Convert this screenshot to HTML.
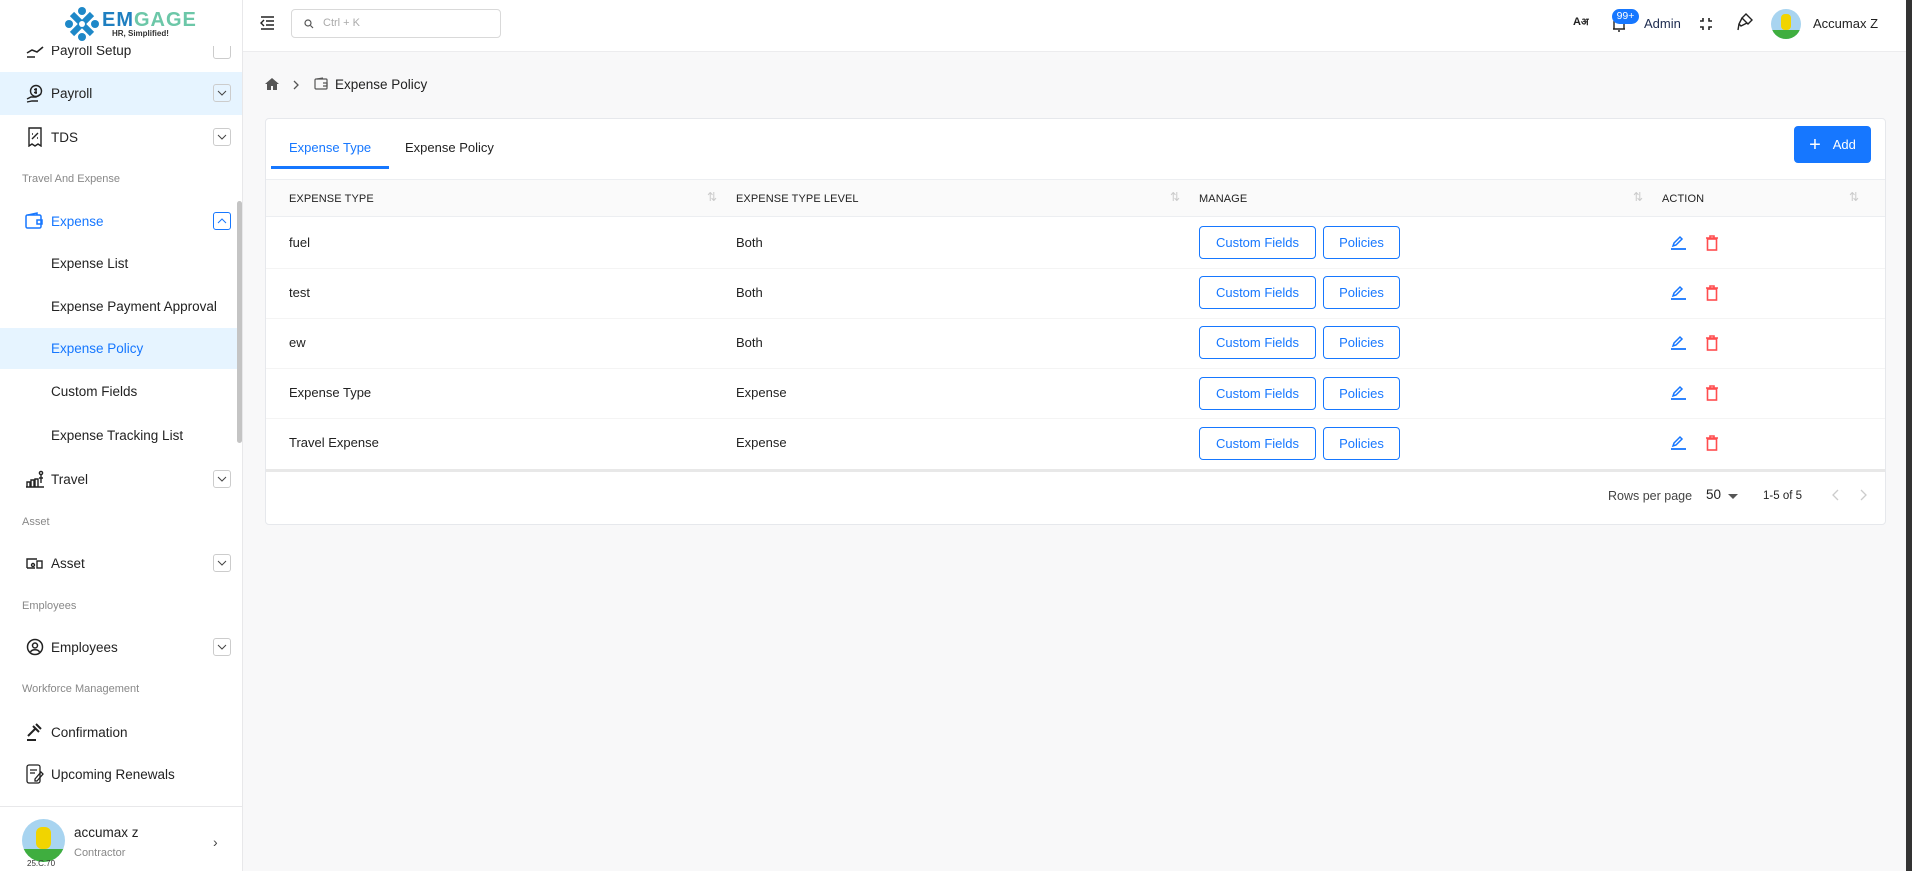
<!DOCTYPE html>
<html><head><meta charset="utf-8"><style>
*{box-sizing:border-box;margin:0;padding:0}
body{width:1912px;height:871px;overflow:hidden;background:#f8f8f9;font-family:"Liberation Sans",sans-serif;color:#222;position:relative}
.abs{position:absolute}
#side{left:0;top:0;width:243px;height:871px;background:#fff;border-right:1px solid #e8e8ea;overflow:hidden}
.item{position:absolute;left:0;width:242px;height:42px;display:flex;align-items:center;font-size:13.5px;color:#222}
.item .ic{position:absolute;left:25px;width:20px;height:20px;display:flex;align-items:center;justify-content:center}
.item .tx{position:absolute;left:51px}
.chev{position:absolute;left:213px;width:18px;height:18px;border:1px solid #ccc;border-radius:3px;display:flex;align-items:center;justify-content:center}
.sec{position:absolute;left:22px;font-size:11px;color:#888}
#hdr{left:243px;top:0;width:1669px;height:52px;background:#fff;border-bottom:1px solid #ececee}
.card{left:265px;top:118px;width:1621px;height:407px;background:#fff;border:1px solid #e6e8ec;border-radius:4px}
.th{position:absolute;top:193px;font-size:11px;color:#222;letter-spacing:.1px}
.cell{position:absolute;font-size:13px;color:#222}
.btn{position:absolute;height:33px;border:1px solid #1677ff;border-radius:4px;color:#1677ff;font-size:13px;display:flex;align-items:center;justify-content:center;background:#fff}
.sort{position:absolute;top:190px;color:#ccc;font-size:12px}
</style></head><body>
<div id="side" class="abs">
  <div class="item" style="top:29px;height:42px"><span class="ic"><svg width="20" height="18" viewBox="0 0 20 18"><path d="M2 12l5-3 5 2 6-5M2 16h8" stroke="#222" stroke-width="1.6" fill="none"/></svg></span><span class="tx">Payroll Setup</span><span class="chev" style="top:12px"></span></div>
  <div class="abs" style="left:0;top:0;width:242px;height:46px;background:#fff"></div>
  <div class="abs" style="left:64px;top:6px;width:36px;height:36px">
    <svg width="36" height="36" viewBox="0 0 36 36"><g fill="#1e88c8"><circle cx="18" cy="5" r="4"/><circle cx="18" cy="31" r="4"/><circle cx="5" cy="18" r="4"/><circle cx="31" cy="18" r="4"/><path d="M8 8l20 20M28 8L8 28" stroke="#1e88c8" stroke-width="6"/><circle cx="18" cy="18" r="3" fill="#fff"/></g></svg>
  </div>
  <div class="abs" style="left:102px;top:9px;font-size:20px;font-weight:bold;letter-spacing:1px"><span style="color:#1f7fc0">EM</span><span style="color:#6cc7a8">GAGE</span></div>
  <div class="abs" style="left:112px;top:29px;font-size:8px;font-weight:bold;color:#333">HR, Simplified!</div>

  <div class="item" style="top:72px;height:43px;background:#e6f4ff"><span class="ic"><svg width="20" height="20" viewBox="0 0 20 20" fill="none" stroke="#222" stroke-width="1.4"><circle cx="11" cy="7" r="5.5"/><path d="M11 4v6M9 5.5h3M9 8.5h3M2 15l4-2h5l5-3M2 18l5-1h6"/></svg></span><span class="tx">Payroll</span><span class="chev" style="top:12px"><svg width="10" height="6"><path d="M1 1l4 4 4-4" stroke="#444" fill="none"/></svg></span></div>
  <div class="item" style="top:116px"><span class="ic"><svg width="16" height="20" viewBox="0 0 16 20" fill="none" stroke="#222" stroke-width="1.4"><path d="M2 1h12v18l-3-2-3 2-3-2-3 2z"/><path d="M5 12l6-6M5 7h1M10 11h1"/></svg></span><span class="tx">TDS</span><span class="chev" style="top:12px"><svg width="10" height="6"><path d="M1 1l4 4 4-4" stroke="#444" fill="none"/></svg></span></div>
  <div class="sec" style="top:173px">Travel And Expense</div>
  <div class="item" style="top:200px;color:#1677ff"><span class="ic"><svg width="20" height="18" viewBox="0 0 20 18" fill="none" stroke="#1677ff" stroke-width="1.5"><rect x="1" y="3" width="15" height="13" rx="1.5"/><path d="M3 3l9-2v2M12 8h5v4h-5z"/></svg></span><span class="tx">Expense</span><span class="chev" style="top:12px;border-color:#1677ff"><svg width="10" height="6"><path d="M1 5l4-4 4 4" stroke="#1677ff" fill="none"/></svg></span></div>
  <div class="item" style="top:242px"><span class="tx">Expense List</span></div>
  <div class="item" style="top:285px"><span class="tx">Expense Payment Approval</span></div>
  <div class="item" style="top:328px;height:41px;background:#e6f4ff;color:#1677ff"><span class="tx">Expense Policy</span></div>
  <div class="abs" style="left:240px;top:328px;width:2px;height:41px;background:#1677ff"></div>
  <div class="item" style="top:370px"><span class="tx">Custom Fields</span></div>
  <div class="item" style="top:414px"><span class="tx">Expense Tracking List</span></div>
  <div class="item" style="top:458px"><span class="ic"><svg width="20" height="18" viewBox="0 0 20 18" fill="none" stroke="#222" stroke-width="1.4"><path d="M1 17h18M2 17v-5h3v5M6 17v-7h3v7M10 17V9h3v8"/><circle cx="16" cy="3" r="1.6"/><path d="M16 5v8M14 8h4"/></svg></span><span class="tx">Travel</span><span class="chev" style="top:12px"><svg width="10" height="6"><path d="M1 1l4 4 4-4" stroke="#444" fill="none"/></svg></span></div>
  <div class="sec" style="top:516px">Asset</div>
  <div class="item" style="top:542px"><span class="ic"><svg width="18" height="14" viewBox="0 0 18 14" fill="none" stroke="#222" stroke-width="1.4"><path d="M1 12V3h10M1 12h8"/><rect x="11" y="5" width="5" height="7"/><circle cx="7" cy="9" r="1.5"/></svg></span><span class="tx">Asset</span><span class="chev" style="top:12px"><svg width="10" height="6"><path d="M1 1l4 4 4-4" stroke="#444" fill="none"/></svg></span></div>
  <div class="sec" style="top:600px">Employees</div>
  <div class="item" style="top:626px"><span class="ic"><svg width="18" height="18" viewBox="0 0 18 18" fill="none" stroke="#222" stroke-width="1.5"><circle cx="9" cy="9" r="7.5"/><circle cx="9" cy="7.5" r="2.5"/><path d="M4.5 14c1.5-3 7.5-3 9 0"/></svg></span><span class="tx">Employees</span><span class="chev" style="top:12px"><svg width="10" height="6"><path d="M1 1l4 4 4-4" stroke="#444" fill="none"/></svg></span></div>
  <div class="sec" style="top:683px">Workforce Management</div>
  <div class="item" style="top:711px"><span class="ic"><svg width="20" height="18" viewBox="0 0 20 18" fill="none" stroke="#222" stroke-width="2"><path d="M8 3l6 6M11 1l5 5M10 6l-7 7M2 17h9"/></svg></span><span class="tx">Confirmation</span></div>
  <div class="item" style="top:753px"><span class="ic"><svg width="18" height="20" viewBox="0 0 18 20" fill="none" stroke="#222" stroke-width="1.3"><rect x="1" y="1" width="13" height="18" rx="2"/><path d="M4 6h7M4 9h5M9 15l6-7 2 2-6 7h-2z"/></svg></span><span class="tx">Upcoming Renewals</span></div>
  <div class="abs" style="left:237px;top:201px;width:5px;height:242px;background:#c4c4c4;border-radius:3px"></div>
  <div class="abs" style="left:0;top:806px;width:242px;height:65px;background:#fff;border-top:1px solid #e8e8ea"></div>
  <div class="abs" style="left:22px;top:819px;width:43px;height:43px;border-radius:50%;background:#a8d4f0;overflow:hidden"><div style="position:absolute;left:0;top:30px;width:43px;height:20px;background:#3fae3f"></div><div style="position:absolute;left:14px;top:8px;width:15px;height:22px;background:#f1d400;border-radius:6px"></div></div>
  <div class="abs" style="left:27px;top:859px;font-size:8px;color:#333">25.C.70</div>
  <div class="abs" style="left:74px;top:825px;font-size:13.5px;color:#222">accumax z</div>
  <div class="abs" style="left:74px;top:847px;font-size:11px;color:#888">Contractor</div>
  <div class="abs" style="left:213px;top:834px;font-size:14px;color:#444">›</div>
</div>

<div id="hdr" class="abs">
  <svg class="abs" style="left:17px;top:16px" width="15" height="14" viewBox="0 0 15 14" fill="none" stroke="#222" stroke-width="1.4"><path d="M1 1h13M6 5h8M6 9h8M1 13h13M4 4L1 7l3 3"/></svg>
  <div class="abs" style="left:48px;top:9px;width:210px;height:29px;border:1px solid #d9d9d9;border-radius:4px"></div>
  <svg class="abs" style="left:61px;top:19px" width="10" height="10" viewBox="0 0 10 10" fill="none" stroke="#555" stroke-width="1.2"><circle cx="4" cy="4" r="3"/><path d="M6.5 6.5L9 9"/></svg>
  <div class="abs" style="left:80px;top:17px;font-size:11px;color:#aaa">Ctrl + K</div>
  <div class="abs" style="left:1330px;top:14px;font-size:11px;font-weight:bold">A<span style="font-size:10px">अ</span></div>
  <svg class="abs" style="left:1369px;top:15px" width="14" height="18" viewBox="0 0 14 18" fill="none" stroke="#222" stroke-width="1.4"><path d="M2 14V7a5 5 0 0110 0v7zM1 14h12M6 16h2"/></svg>
  <div class="abs" style="left:1369px;top:9px;width:27px;height:15px;border-radius:8px;background:#1677ff;color:#fff;font-size:10.5px;text-align:center;line-height:15px">99+</div>
  <div class="abs" style="left:1401px;top:16px;font-size:13px;color:#1d2b4f">Admin</div>
  <svg class="abs" style="left:1456px;top:17px" width="14" height="14" viewBox="0 0 14 14" fill="none" stroke="#222" stroke-width="1.6"><path d="M1 4h3V1M10 1v3h3M13 10h-3v3M4 13v-3H1"/></svg>
  <svg class="abs" style="left:1494px;top:13px" width="16" height="18" viewBox="0 0 16 18" fill="none" stroke="#222" stroke-width="1.4"><path d="M9 1l6 6-4 4-6-6zM5 5l-3 6 2 2 6-3M2 11l-1 6"/></svg>
  <div class="abs" style="left:1528px;top:9px;width:30px;height:30px;border-radius:50%;background:#a8d4f0;overflow:hidden"><div style="position:absolute;left:0;top:21px;width:30px;height:10px;background:#3fae3f"></div><div style="position:absolute;left:10px;top:5px;width:10px;height:16px;background:#f1d400;border-radius:4px"></div></div>
  <div class="abs" style="left:1570px;top:16px;font-size:13px;color:#222">Accumax Z</div>
</div>
<div class="abs" style="left:1906px;top:0;width:6px;height:871px;background:#333"></div>

<svg class="abs" style="left:265px;top:78px" width="14" height="12" viewBox="0 0 14 12"><path d="M7 0L0 6h2v6h4V8h2v4h4V6h2z" fill="#555"/></svg>
<svg class="abs" style="left:293px;top:80px" width="7" height="10"><path d="M1 1l4 4-4 4" stroke="#555" fill="none" stroke-width="1.3"/></svg>
<svg class="abs" style="left:314px;top:77px" width="14" height="13" viewBox="0 0 14 13" fill="none" stroke="#555" stroke-width="1.2"><rect x="1" y="2" width="12" height="10" rx="1"/><path d="M3 2l6-1M9 6h4v3H9"/></svg>
<div class="abs" style="left:335px;top:77px;font-size:13.5px;color:#222">Expense Policy</div>

<div class="card abs"></div>
<div class="abs" style="left:289px;top:140px;font-size:13px;color:#1677ff">Expense Type</div>
<div class="abs" style="left:405px;top:140px;font-size:13px;color:#222">Expense Policy</div>
<div class="abs" style="left:271px;top:166px;width:118px;height:3px;background:#1677ff"></div>
<div class="abs" style="left:266px;top:179px;width:1619px;height:38px;background:#fafafa;border-top:1px solid #eceef1;border-bottom:1px solid #eceef1"></div>
<div class="abs" style="left:1794px;top:126px;width:77px;height:37px;background:#1677ff;border-radius:4px;color:#fff;font-size:13px;display:flex;align-items:center;justify-content:center"><span style="font-size:20px;margin-right:12px;line-height:1">+</span>Add</div>

<div class="th" style="left:289px">EXPENSE TYPE</div>
<div class="th" style="left:736px">EXPENSE TYPE LEVEL</div>
<div class="th" style="left:1199px">MANAGE</div>
<div class="th" style="left:1662px">ACTION</div>
<div class="sort" style="left:707px">⇅</div><div class="sort" style="left:1170px">⇅</div><div class="sort" style="left:1633px">⇅</div><div class="sort" style="left:1849px">⇅</div>

<div class="abs" style="left:266px;top:268px;width:1619px;height:1px;background:#f4f4f4"></div>
<div class="abs" style="left:266px;top:318px;width:1619px;height:1px;background:#f4f4f4"></div>
<div class="abs" style="left:266px;top:368px;width:1619px;height:1px;background:#f4f4f4"></div>
<div class="abs" style="left:266px;top:418px;width:1619px;height:1px;background:#f4f4f4"></div>
<div class="abs" style="left:266px;top:469px;width:1619px;height:3px;background:#e8e8e8"></div>

<div class="cell" style="left:289px;top:235px">fuel</div><div class="cell" style="left:736px;top:235px">Both</div>
<div class="cell" style="left:289px;top:285px">test</div><div class="cell" style="left:736px;top:285px">Both</div>
<div class="cell" style="left:289px;top:335px">ew</div><div class="cell" style="left:736px;top:335px">Both</div>
<div class="cell" style="left:289px;top:385px">Expense Type</div><div class="cell" style="left:736px;top:385px">Expense</div>
<div class="cell" style="left:289px;top:435px">Travel Expense</div><div class="cell" style="left:736px;top:435px">Expense</div>

<div class="btn" style="left:1199px;top:226px;width:117px">Custom Fields</div><div class="btn" style="left:1323px;top:226px;width:77px">Policies</div>
<div class="btn" style="left:1199px;top:276px;width:117px">Custom Fields</div><div class="btn" style="left:1323px;top:276px;width:77px">Policies</div>
<div class="btn" style="left:1199px;top:326px;width:117px">Custom Fields</div><div class="btn" style="left:1323px;top:326px;width:77px">Policies</div>
<div class="btn" style="left:1199px;top:377px;width:117px">Custom Fields</div><div class="btn" style="left:1323px;top:377px;width:77px">Policies</div>
<div class="btn" style="left:1199px;top:427px;width:117px">Custom Fields</div><div class="btn" style="left:1323px;top:427px;width:77px">Policies</div>

<svg width="0" height="0" style="position:absolute"><defs>
<g id="ed"><path d="M3 12l1-3 6-6 2 2-6 6z" fill="none" stroke="#1677ff" stroke-width="1.5"/><path d="M1 15h15" stroke="#1677ff" stroke-width="1.8"/></g>
<g id="tr"><path d="M1 3h12M5 3V1h4v2" stroke="#ff4d4f" stroke-width="1.6" fill="none"/><rect x="2.5" y="4" width="9" height="11" fill="none" stroke="#ff4d4f" stroke-width="1.6"/></g>
</defs></svg>
<svg class="abs" style="left:1670px;top:234px" width="17" height="17"><use href="#ed"/></svg><svg class="abs" style="left:1705px;top:235px" width="14" height="16"><use href="#tr"/></svg>
<svg class="abs" style="left:1670px;top:284px" width="17" height="17"><use href="#ed"/></svg><svg class="abs" style="left:1705px;top:285px" width="14" height="16"><use href="#tr"/></svg>
<svg class="abs" style="left:1670px;top:334px" width="17" height="17"><use href="#ed"/></svg><svg class="abs" style="left:1705px;top:335px" width="14" height="16"><use href="#tr"/></svg>
<svg class="abs" style="left:1670px;top:384px" width="17" height="17"><use href="#ed"/></svg><svg class="abs" style="left:1705px;top:385px" width="14" height="16"><use href="#tr"/></svg>
<svg class="abs" style="left:1670px;top:434px" width="17" height="17"><use href="#ed"/></svg><svg class="abs" style="left:1705px;top:435px" width="14" height="16"><use href="#tr"/></svg>

<div class="abs" style="left:1608px;top:489px;font-size:12.5px;color:#444">Rows per page</div>
<div class="abs" style="left:1706px;top:487px;font-size:13.5px;color:#222">50</div>
<svg class="abs" style="left:1728px;top:494px" width="10" height="5"><path d="M0 0h10L5 5z" fill="#555"/></svg>
<div class="abs" style="left:1763px;top:490px;font-size:11.5px;color:#222">1-5 of 5</div>
<svg class="abs" style="left:1832px;top:489px" width="7" height="12"><path d="M6 1L1 6l5 5" stroke="#ccc" fill="none" stroke-width="1.3"/></svg>
<svg class="abs" style="left:1860px;top:489px" width="7" height="12"><path d="M1 1l5 5-5 5" stroke="#ccc" fill="none" stroke-width="1.3"/></svg>
</body></html>
